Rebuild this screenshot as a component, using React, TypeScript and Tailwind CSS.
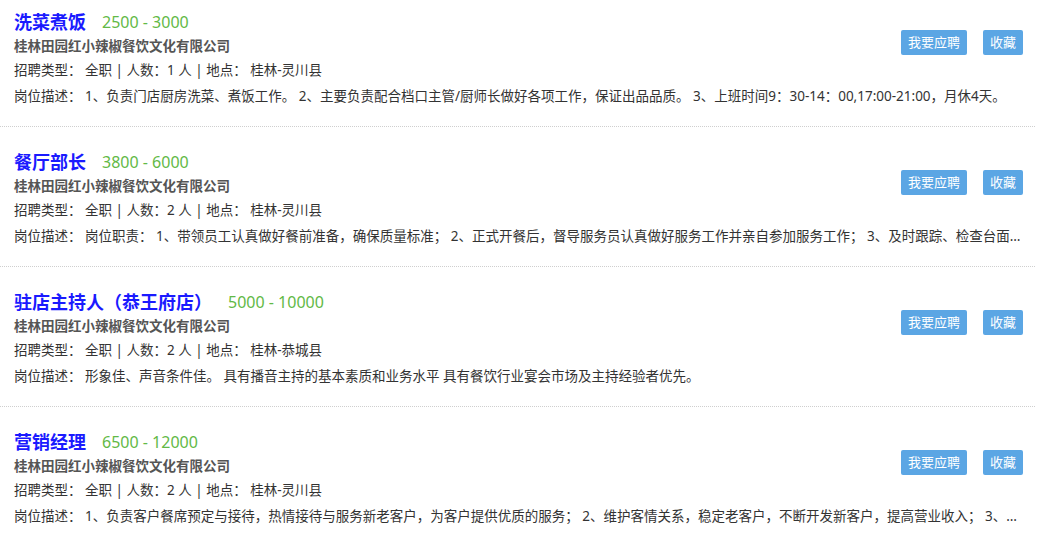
import React from "react";

type Job = {
  title: string;
  salary: string;
  company: string;
  count: string;
  location: string;
  desc: string;
};

const jobs: Job[] = [
  {
    title: "洗菜煮饭",
    salary: "2500 - 3000",
    company: "桂林田园红小辣椒餐饮文化有限公司",
    count: "1",
    location: "桂林-灵川县",
    desc: "1、负责门店厨房洗菜、煮饭工作。 2、主要负责配合档口主管/厨师长做好各项工作，保证出品品质。 3、上班时间9：30-14：00,17:00-21:00，月休4天。",
  },
  {
    title: "餐厅部长",
    salary: "3800 - 6000",
    company: "桂林田园红小辣椒餐饮文化有限公司",
    count: "2",
    location: "桂林-灵川县",
    desc: "岗位职责： 1、带领员工认真做好餐前准备，确保质量标准； 2、正式开餐后，督导服务员认真做好服务工作并亲自参加服务工作； 3、及时跟踪、检查台面服务情况，发现问题及时解决。",
  },
  {
    title: "驻店主持人（恭王府店）",
    salary: "5000 - 10000",
    company: "桂林田园红小辣椒餐饮文化有限公司",
    count: "2",
    location: "桂林-恭城县",
    desc: "形象佳、声音条件佳。 具有播音主持的基本素质和业务水平 具有餐饮行业宴会市场及主持经验者优先。",
  },
  {
    title: "营销经理",
    salary: "6500 - 12000",
    company: "桂林田园红小辣椒餐饮文化有限公司",
    count: "2",
    location: "桂林-灵川县",
    desc: "1、负责客户餐席预定与接待，热情接待与服务新老客户，为客户提供优质的服务； 2、维护客情关系，稳定老客户，不断开发新客户，提高营业收入； 3、完成公司下达的各项营销任务。",
  },
];

const font = {
  fontFamily: '"Noto Sans", "Noto Sans CJK SC", sans-serif',
};

export default function App() {
  return (
    <div className="w-[1035px] bg-white" style={font}>
      {jobs.map((j, i) => (
        <div
          key={i}
          className="pt-[10px] pb-[18px] mb-[13px] pl-[14px] pr-[12px] border-b border-dotted border-[#cfcfcf]"
        >
          <div className="float-right flex gap-[16px] mt-[20px]">
            <button className="h-[25px] px-[7px] rounded-[2px] bg-[#5ba6e4] text-white text-[13px] leading-[25px]">
              我要应聘
            </button>
            <button className="h-[25px] px-[7px] rounded-[2px] bg-[#5ba6e4] text-white text-[13px] leading-[25px]">
              收藏
            </button>
          </div>
          <div className="flex items-center h-[24px]">
            <span className="text-[18px] font-bold text-[#1a1aff] leading-[24px]">
              {j.title}
            </span>
            <span className="ml-[16px] text-[16px] text-[#62b946] leading-[24px]">
              {j.salary}
            </span>
          </div>
          <div className="h-[24px] leading-[24px] text-[13.5px] font-bold text-[#555]">
            {j.company}
          </div>
          <div className="h-[24px] leading-[24px] text-[13.5px] text-[#333] whitespace-pre">
            {"招聘类型： 全职 | 人数：" + j.count + " 人 | 地点： " + j.location}
          </div>
          <div className="mt-[2px] h-[24px] leading-[24px] text-[13.5px] text-[#333] truncate pr-[2px]">
            {"岗位描述： " + j.desc}
          </div>
        </div>
      ))}
    </div>
  );
}
